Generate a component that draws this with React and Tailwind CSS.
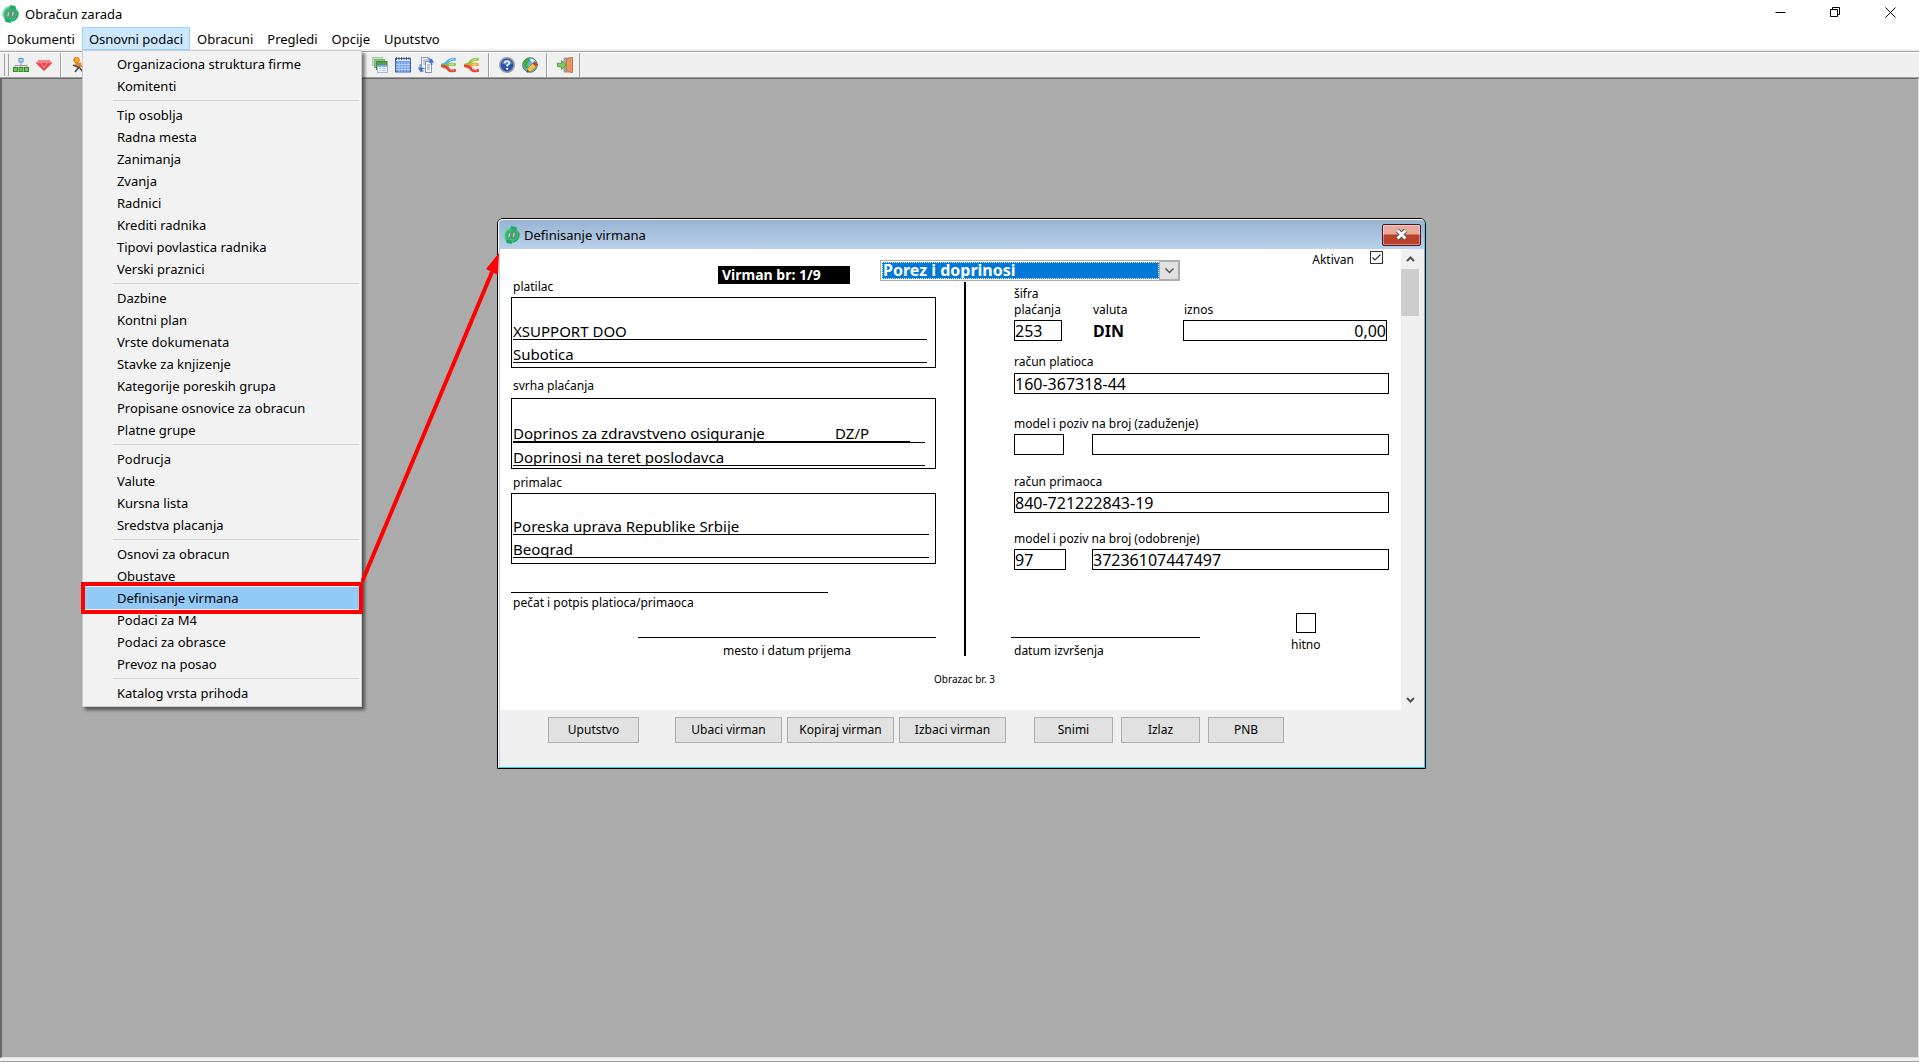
import React, { useState } from "react"

const menus = ["Dokumenti", "Osnovni podaci", "Obracuni", "Pregledi", "Opcije", "Uputstvo"]

const menuGroups = [
  ["Organizaciona struktura firme", "Komitenti"],
  ["Tip osoblja", "Radna mesta", "Zanimanja", "Zvanja", "Radnici", "Krediti radnika", "Tipovi povlastica radnika", "Verski praznici"],
  ["Dazbine", "Kontni plan", "Vrste dokumenata", "Stavke za knjizenje", "Kategorije poreskih grupa", "Propisane osnovice za obracun", "Platne grupe"],
  ["Podrucja", "Valute", "Kursna lista", "Sredstva placanja"],
  ["Osnovi za obracun", "Obustave", "Definisanje virmana", "Podaci za M4", "Podaci za obrasce", "Prevoz na posao"],
  ["Katalog vrsta prihoda"],
]

const AppLogo = () => (
  <svg width="17" height="18" viewBox="0 0 17 18" className="shrink-0">
    <circle cx="8.5" cy="9" r="7.8" fill="#2fc476" />
    <path d="M8 0 L13.5 1 L14 4.5 L8.5 4 Z" fill="#22a862" />
    <path d="M9 18 L3.5 17 L3 13.5 L8.5 14 Z" fill="#22a862" />
    <path d="M1.8 12 A7.2 7.2 0 0 1 7 2" fill="none" stroke="#6fe0a2" strokeWidth="1.6" />
    <path d="M15.2 6 A7.2 7.2 0 0 1 10 16" fill="none" stroke="#1fa75f" strokeWidth="1.6" />
    <ellipse cx="6.3" cy="9" rx="2.1" ry="3.6" fill="none" stroke="#6b9485" strokeWidth="1.8" transform="rotate(12 6.3 9)" />
    <ellipse cx="10.8" cy="8.8" rx="2.1" ry="3.6" fill="none" stroke="#5f8f7c" strokeWidth="1.8" transform="rotate(12 10.8 8.8)" />
    <path d="M6.6 7.5 L6 10.8 M11.1 7 L10.5 10.5" stroke="#b9ecd0" strokeWidth="1" />
  </svg>
)

const OrgIcon = () => (
  <svg width="16" height="16" viewBox="0 0 16 16">
    <path d="M8 5 V8 M2 11 V8.5 H14 V11 M8 8 V11" fill="none" stroke="#9a9a9a" />
    <rect x="6" y="1.5" width="4" height="3.5" fill="#b5d6fb" stroke="#5b8fd6" />
    <rect x="0.5" y="10.5" width="4" height="4" fill="#6cc45a" stroke="#3a8a2c" />
    <rect x="6" y="10.5" width="4" height="4" fill="#6cc45a" stroke="#3a8a2c" />
    <rect x="11.5" y="10.5" width="4" height="4" fill="#6cc45a" stroke="#3a8a2c" />
  </svg>
)

const GemIcon = () => (
  <svg width="16" height="16" viewBox="0 0 16 16">
    <path d="M2.5 3 H13.5 L16 6.3 L8 14 L0 6.3 Z" fill="#e8434a" />
    <path d="M2.5 3 H13.5 L16 6.3 H0 Z" fill="#f28587" />
    <path d="M4.5 6.3 L8 4 L11.5 6.3 L8 11.5 Z" fill="#f3888b" />
    <path d="M5.5 6.3 H10.5 L8 9 Z" fill="#d9323a" />
  </svg>
)

const PersonIcon = () => (
  <svg width="16" height="16" viewBox="0 0 16 16">
    <circle cx="5.5" cy="3" r="2.8" fill="#f5a623" stroke="#c9720a" strokeWidth="0.8" />
    <path d="M4 6 L10 5.5 L11 10 L5 10 Z" fill="#e8862a" />
    <path d="M2 8 L9 11 M8 10 L4 15 M8 10 L12 15" stroke="#4b4b4b" strokeWidth="1.6" />
  </svg>
)

const WindowsIcon = () => (
  <svg width="16" height="16" viewBox="0 0 16 16">
    <rect x="0.5" y="0.5" width="10" height="8" fill="#c3e0c0" stroke="#a9cfa5" />
    <rect x="2.5" y="2.5" width="10" height="8" fill="#8fc38a" stroke="#7ab075" />
    <rect x="4.5" y="4.5" width="10.5" height="8" fill="#559f50" stroke="#418a3d" />
    <rect x="5.5" y="8.5" width="10" height="7" fill="#eef5ff" stroke="#9db9de" />
    <path d="M5.5 9 H15.5" stroke="#6ea3e8" strokeWidth="1.6" />
    <path d="M7 11.5 H9 M10 11.5 H14 M7 13.5 H9 M10 13.5 H14" stroke="#b5cbea" />
  </svg>
)

const CalendarIcon = () => (
  <svg width="16" height="16" viewBox="0 0 16 16">
    <rect x="0.5" y="1.5" width="15" height="13.5" fill="#6c9bea" stroke="#3a64b8" />
    <rect x="1" y="2" width="14" height="2" fill="#e8eefb" />
    <path d="M1.5 0 V3 M4 0 V3 M6.5 0 V3 M9 0 V3 M11.5 0 V3 M14 0 V3" stroke="#555" strokeWidth="0.9" />
    <path d="M1 7.5 H15 M1 10 H15 M1 12.5 H15 M4 5 V15 M7 5 V15 M10 5 V15 M13 5 V15" stroke="#c3d8fb" strokeWidth="0.8" />
  </svg>
)

const SyncIcon = () => (
  <svg width="16" height="16" viewBox="0 0 16 16">
    <rect x="3.5" y="0.5" width="6.5" height="11" fill="#fff" stroke="#8896b4" />
    <rect x="7.5" y="4.5" width="6" height="11" fill="#fff" stroke="#8896b4" />
    <path d="M5 3 H9 M5 5 H8 M5 7 H7 M9 8 H12 M9 10 H12 M9 12 H12" stroke="#8492b0" />
    <path d="M10.5 2 Q13.5 2 13.5 8" fill="none" stroke="#4b80d8" strokeWidth="2" />
    <path d="M10.5 5.5 L13.5 1.5 L16 5.5 Z" fill="#3a6cc8" />
    <path d="M2.5 7 V13 Q2.5 14 5.5 14" fill="none" stroke="#7aa5ea" strokeWidth="2" />
    <path d="M0 10.5 L5.5 10.5 L3 15.5 Z" fill="#3a6cc8" />
  </svg>
)

const BranchIcon = ({ top, middle }) => (
  <svg width="16" height="16" viewBox="0 0 16 16">
    <path d="M13.5 2.3 Q9 2 6.5 5 Q5 7.5 1.5 8" fill="none" stroke={top} strokeWidth="3" strokeLinecap="round" />
    <path d="M13.5 7.6 Q9 6.8 7 8.2 Q4 9.3 1.5 8.5" fill="none" stroke={middle} strokeWidth="3" strokeLinecap="round" />
    <path d="M13.5 13.5 Q9 14.5 7 11.5 Q5 9.2 1.5 9" fill="none" stroke="#dd4a35" strokeWidth="3.2" strokeLinecap="round" />
    <path d="M13 13 Q9.5 13.2 8 11.2 M13 2 Q9.5 2 7.5 4.2 M13 7.3 Q10 6.8 8 7.8" fill="none" stroke="#fff" strokeOpacity="0.6" strokeWidth="0.9" />
  </svg>
)

const HelpIcon = () => (
  <svg width="16" height="16" viewBox="0 0 16 16">
    <circle cx="8" cy="8" r="7.2" fill="#2b50ad" stroke="#9a9ca6" strokeWidth="1.6" />
    <path d="M2.5 6.5 A6 6 0 0 1 13.5 6.5 Q8 9 2.5 6.5 Z" fill="#5c82d6" />
    <path d="M5.8 6.2 Q5.8 4 8 4 Q10.3 4 10.3 6 Q10.3 7.3 8.2 8.2 V9.6" fill="none" stroke="#fff" strokeWidth="1.7" />
    <circle cx="8.2" cy="11.8" r="1.1" fill="#fff" />
  </svg>
)

const GlobeIcon = () => (
  <svg width="16" height="16" viewBox="0 0 16 16">
    <circle cx="8" cy="8" r="7.3" fill="#5db6e6" stroke="#3f8a5a" />
    <path d="M1 6 Q3 1.5 7 1 L8 4 L5 7 L6 10 L3 12 Z" fill="#49a83e" />
    <path d="M8 1.5 L13 3 L11 6 L9 4 Z" fill="#d9f0fa" />
    <path d="M5 15 L5.5 11.5 L11 6 L14.5 9 L9 14.5 Z" fill="#f4c045" stroke="#b9791a" strokeWidth="0.7" />
    <path d="M10.5 6.5 L12.5 4.5 L16 7.5 L14 9.5 Z" fill="#d8352a" />
    <path d="M4.5 15.5 L5.2 12.5 L7.5 14.6 Z" fill="#555" />
  </svg>
)

const ExitIcon = () => (
  <svg width="16" height="16" viewBox="0 0 16 16">
    <path d="M7 1 H15.5 V15 H7 Z" fill="#b0a49b" stroke="#9c9c9c" />
    <path d="M9.5 2 L15.5 0.3 V15.7 L9.5 14 Z" fill="#e5955f" stroke="#bf6b34" strokeWidth="0.7" />
    <path d="M0.4 6.3 H4.5 V3.5 L9.3 8 L4.5 12.5 V9.8 H0.4 Z" fill="#7cc95f" stroke="#4a9636" strokeWidth="0.8" />
  </svg>
)

const ToolButton = ({ label, children }) => (
  <button type="button" aria-label={label} className="flex w-[23px] shrink-0 items-center justify-center">
    {children}
  </button>
)

const ToolSeparator = () => (
  <div className="flex w-3 shrink-0 justify-center">
    <div className="w-px bg-[#a0a0a0]" />
    <div className="w-px bg-white" />
  </div>
)

const TitleBar = () => (
  <header className="flex h-[27px] shrink-0 items-start justify-between bg-white pl-[2px]">
    <div className="flex items-center gap-[6px] pt-1">
      <AppLogo />
      <span className="text-[13px] leading-5">Obračun zarada</span>
    </div>
    <div className="flex pr-px">
      <button type="button" aria-label="Minimize" className="flex h-6 w-[55px] items-center justify-center">
        <svg width="11" height="11" viewBox="0 0 11 11"><path d="M0.5 5.5 H10.5" stroke="#000" /></svg>
      </button>
      <button type="button" aria-label="Restore" className="flex h-6 w-[55px] items-center justify-center">
        <svg width="11" height="11" viewBox="0 0 11 11"><path d="M0.5 2.5 H7.5 V9.5 H0.5 Z M2.5 2.5 V0.5 H9.5 V7.5 H7.5" fill="none" stroke="#000" /></svg>
      </button>
      <button type="button" aria-label="Close" className="flex h-6 w-[55px] items-center justify-center">
        <svg width="11" height="11" viewBox="0 0 11 11"><path d="M0.5 0.5 L10.5 10.5 M10.5 0.5 L0.5 10.5" stroke="#000" /></svg>
      </button>
    </div>
  </header>
)

const DropdownMenu = ({ selected, onSelect }) => (
  <div className="absolute top-[22px] -left-px z-10 w-[280px] border border-[#cccccc] bg-[#f2f2f2] py-[2px] shadow-[3px_3px_3px_rgba(0,0,0,0.5)]">
    {menuGroups.map((group, index) => (
      <ul key={index}>
        {index > 0 && <li aria-hidden="true" className="mr-[2px] ml-[30px] h-[7px] py-[3px]"><div className="h-px bg-[#d7d7d7]" /></li>}
        {group.map((item) => (
          <li key={item}>
            <button
              type="button"
              onClick={() => onSelect(item)}
              className={`relative block h-[22px] w-full pl-[34px] text-left ${item === selected ? "bg-[#91c9f7]" : ""}`}
            >
              {item}
              {item === selected && <span className="absolute -inset-x-[2px] -top-[5px] -bottom-[5px] border-4 border-[#fe0000]" />}
            </button>
          </li>
        ))}
      </ul>
    ))}
  </div>
)

const MenuBar = ({ selected, onSelect }) => (
  <nav className="flex h-[22px] shrink-0 bg-white text-[13px] leading-[22px]">
    {menus.map((menu) =>
      menu === "Osnovni podaci" ? (
        <div key={menu} className="relative h-[23px] border border-[#99d1ff] bg-[#cce8ff]">
          <button type="button" className="px-[6px]">{menu}</button>
          <DropdownMenu selected={selected} onSelect={onSelect} />
        </div>
      ) : (
        <button key={menu} type="button" className="h-6 px-[7px]">{menu}</button>
      )
    )}
  </nav>
)

const Toolbar = () => (
  <div className="mt-[2px] flex h-[27px] shrink-0 border-t border-b border-[#a0a0a0] bg-[#f0f0f0]">
    <div className="flex w-full border-t border-white">
      <div className="my-px ml-1 flex w-[5px] shrink-0 justify-between">
        <div className="w-px bg-[#a0a0a0]" />
        <div className="w-px bg-[#a0a0a0]" />
      </div>
      <ToolButton label="Organizaciona struktura"><OrgIcon /></ToolButton>
      <ToolButton label="Vrednosti"><GemIcon /></ToolButton>
      <ToolSeparator />
      <ToolButton label="Radnici"><PersonIcon /></ToolButton>
      <div className="w-[266px] shrink-0" />
      <ToolSeparator />
      <ToolButton label="Prozori"><WindowsIcon /></ToolButton>
      <ToolButton label="Kalendar"><CalendarIcon /></ToolButton>
      <ToolButton label="Prenos"><SyncIcon /></ToolButton>
      <ToolButton label="Raspodela"><BranchIcon top="#4fb4e0" middle="#8cc63f" /></ToolButton>
      <ToolButton label="Raspodela po grupama"><BranchIcon top="#8cc63f" middle="#f5a033" /></ToolButton>
      <ToolSeparator />
      <ToolButton label="Uputstvo"><HelpIcon /></ToolButton>
      <ToolButton label="Internet"><GlobeIcon /></ToolButton>
      <ToolSeparator />
      <ToolButton label="Izlaz"><ExitIcon /></ToolButton>
      <div className="ml-[3px] w-px bg-[#a0a0a0]" />
    </div>
  </div>
)

const LinedInput = ({ className = "h-[23px]", ...props }) => (
  <input type="text" className={`min-w-0 border-b border-black pt-[5px] text-[15px] leading-4 outline-none ${className}`} {...props} />
)

const BoxInput = ({ className = "", ...props }) => (
  <input type="text" className={`h-[21px] min-w-0 border border-black text-base leading-4 outline-none ${className}`} {...props} />
)

const PayerColumn = () => (
  <div className="w-[425px] shrink-0">
    <label htmlFor="platilac" className="block pl-[2px]">platilac</label>
    <div className="mt-[2px] flex h-[71px] flex-col justify-end border border-black pr-2 pb-1 pl-px">
      <LinedInput id="platilac" defaultValue="XSUPPORT DOO" />
      <LinedInput aria-label="mesto platioca" defaultValue="Subotica" />
    </div>
    <label htmlFor="svrha" className="mt-[10px] block pl-[2px]">svrha plaćanja</label>
    <div className="mt-1 flex h-[71px] flex-col justify-end border border-black pr-[10px] pb-[2px] pl-px">
      <div className="flex border-b border-black">
        <LinedInput id="svrha" className="h-[22px] w-[322px]" defaultValue="Doprinos za zdravstveno osiguranje" />
        <LinedInput aria-label="oznaka" className="h-[22px] w-[75px]" defaultValue="DZ/P" />
      </div>
      <LinedInput aria-label="opis" defaultValue="Doprinosi na teret poslodavca" />
    </div>
    <label htmlFor="primalac" className="mt-[6px] block pl-[2px]">primalac</label>
    <div className="mt-[2px] flex h-[71px] flex-col justify-end border border-black pr-[6px] pb-[5px] pl-px">
      <LinedInput id="primalac" defaultValue="Poreska uprava Republike Srbije" />
      <LinedInput aria-label="mesto primaoca" defaultValue="Beograd" />
    </div>
    <div className="mt-7 w-[317px] border-t border-black pt-[2px] pl-[2px]">pečat i potpis platioca/primaoca</div>
    <div className="mt-[26px] ml-[127px] border-t border-black pt-[5px] text-center">mesto i datum prijema</div>
  </div>
)

const PaymentColumn = () => (
  <div className="w-[375px] shrink-0 pt-[7px]">
    <div className="flex items-end">
      <div className="w-[79px]">
        <label htmlFor="sifra" className="block w-12">šifra plaćanja</label>
        <BoxInput id="sifra" className="mt-[2px] w-12" defaultValue="253" />
      </div>
      <div className="w-[90px]">
        <div>valuta</div>
        <div className="mt-[2px] h-[21px] text-base leading-[22px] font-bold">DIN</div>
      </div>
      <div>
        <label htmlFor="iznos" className="block pl-px">iznos</label>
        <BoxInput id="iznos" className="mt-[2px] w-[204px] text-right" defaultValue="0,00" />
      </div>
    </div>
    <label htmlFor="racun-platioca" className="mt-[13px] block">račun platioca</label>
    <BoxInput id="racun-platioca" className="mt-[3px] w-full" defaultValue="160-367318-44" />
    <label htmlFor="zaduzenje" className="mt-[22px] block">model i poziv na broj (zaduženje)</label>
    <div className="mt-[2px] flex justify-between">
      <BoxInput aria-label="model zaduženja" className="w-[50px]" />
      <BoxInput id="zaduzenje" className="w-[297px]" />
    </div>
    <label htmlFor="racun-primaoca" className="mt-[19px] block">račun primaoca</label>
    <BoxInput id="racun-primaoca" className="mt-[2px] w-full" defaultValue="840-721222843-19" />
    <label htmlFor="odobrenje" className="mt-[18px] block">model i poziv na broj (odobrenje)</label>
    <div className="mt-[2px] flex justify-between">
      <BoxInput aria-label="model odobrenja" className="w-[52px]" defaultValue="97" />
      <BoxInput id="odobrenje" className="w-[297px]" defaultValue="37236107447497" />
    </div>
    <div className="mt-[43px] -ml-[3px] flex">
      <div className="mt-6 w-[189px] border-t border-black pt-[5px] pl-[3px]">datum izvršenja</div>
      <div className="ml-[91px] flex flex-col items-center gap-1">
        <input id="hitno" type="checkbox" className="size-5 appearance-none border border-black bg-white" />
        <label htmlFor="hitno">hitno</label>
      </div>
    </div>
  </div>
)

const FooterButton = ({ className, children }) => (
  <button type="button" className={`h-[26px] border border-[#adadad] bg-[#e1e1e1] ${className}`}>{children}</button>
)

const VirmanDialog = () => (
  <section className="absolute top-[139px] left-[495px] flex w-[929px] flex-col rounded-t-md border border-black bg-[#f0f0f0] text-[12px] leading-4">
    <div className="flex flex-col overflow-hidden rounded-t-[5px] border border-white border-r-[#2ad4f4] border-b-[#2ad4f4]">
      <div className="flex h-[29px] items-center bg-linear-to-b from-[#98b4d2] to-[#b9d1ea] pr-[3px] pl-1">
        <AppLogo />
        <h2 className="ml-1 flex-1 text-[13px]">Definisanje virmana</h2>
        <button type="button" aria-label="Zatvori" className="flex h-[22px] w-[39px] items-center justify-center rounded-[2px] border border-[#4a1420] bg-linear-to-b from-[#e9a99d] from-45% to-[#b9412a] to-50% shadow-[inset_0_0_0_1px_rgba(255,255,255,0.4)]">
          <svg width="15" height="13" viewBox="0 0 15 13">
            <path d="M3.5 2.5 L11.5 10.5 M11.5 2.5 L3.5 10.5" stroke="#535666" strokeWidth="4.6" />
            <path d="M3.5 2.5 L11.5 10.5 M11.5 2.5 L3.5 10.5" stroke="#fff" strokeWidth="2.8" />
          </svg>
        </button>
      </div>
      <div className="flex border-l border-[#b9d1ea]">
        <form className="h-[461px] flex-1 bg-white">
          <div className="flex h-[30px] items-start">
            <div className="mt-[17px] ml-[218px] h-[18px] w-[132px] bg-black pl-1 text-[14px] leading-[18px] font-bold text-white">Virman br: 1/9</div>
            <div className="relative mt-[11px] ml-[30px] h-[21px] w-[300px] border border-[#adadad] bg-white p-px">
              <select aria-label="vrsta virmana" className="block h-[17px] w-[277px] appearance-none border border-dotted border-white bg-[#0078d7] text-base leading-[15px] font-bold text-white">
                <option>Porez i doprinosi</option>
              </select>
              <span className="pointer-events-none absolute top-0 right-0 flex h-[19px] w-5 items-center justify-center border border-[#adadad] bg-[#e1e1e1]">
                <svg width="9" height="6" viewBox="0 0 9 6"><path d="M0.5 0.5 L4.5 4.5 L8.5 0.5" fill="none" stroke="#505050" strokeWidth="1.3" /></svg>
              </span>
            </div>
            <div className="mt-[2px] mr-[18px] ml-auto flex items-start gap-4">
              <label htmlFor="aktivan" className="pt-px">Aktivan</label>
              <span className="relative block size-[13px]">
                <input id="aktivan" type="checkbox" defaultChecked className="block size-[13px] appearance-none border border-[#333] bg-white" />
                <svg width="13" height="13" viewBox="0 0 13 13" className="pointer-events-none absolute inset-0"><path d="M2.5 6.5 L5 9 L10.5 3.5" fill="none" stroke="#333" strokeWidth="1.2" /></svg>
              </span>
            </div>
          </div>
          <div className="flex pr-3 pl-[11px]">
            <PayerColumn />
            <div className="mt-[3px] ml-7 h-[374px] w-[2px] shrink-0 bg-black" />
            <div className="ml-12"><PaymentColumn /></div>
          </div>
          <p className="mt-3 ml-[434px] text-[10px]">Obrazac br. 3</p>
        </form>
        <div className="mr-[5px] flex w-[18px] flex-col items-center">
          <button type="button" aria-label="Gore" className="flex h-5 w-full items-center justify-center">
            <svg width="9" height="6" viewBox="0 0 9 6"><path d="M1 5 L4.5 1.5 L8 5" fill="none" stroke="#505050" strokeWidth="2" /></svg>
          </button>
          <div className="h-[47px] w-full bg-[#cdcdcd]" />
          <button type="button" aria-label="Dole" className="mt-auto flex h-5 w-full items-center justify-center">
            <svg width="9" height="6" viewBox="0 0 9 6"><path d="M1 1 L4.5 4.5 L8 1" fill="none" stroke="#505050" strokeWidth="2" /></svg>
          </button>
        </div>
      </div>
      <footer className="flex border-l border-[#b9d1ea] pt-[7px] pb-6 pl-12">
        <FooterButton className="w-[91px]">Uputstvo</FooterButton>
        <div className="ml-9 flex gap-[5px]">
          <FooterButton className="w-[107px]">Ubaci virman</FooterButton>
          <FooterButton className="w-[107px]">Kopiraj virman</FooterButton>
          <FooterButton className="w-[107px]">Izbaci virman</FooterButton>
        </div>
        <div className="ml-7 flex gap-2">
          <FooterButton className="w-[79px]">Snimi</FooterButton>
          <FooterButton className="w-[79px]">Izlaz</FooterButton>
          <FooterButton className="w-[76px]">PNB</FooterButton>
        </div>
      </footer>
    </div>
  </section>
)

const App = () => {
  const [selected, setSelected] = useState("Definisanje virmana")

  return (
    <div className="relative flex h-screen flex-col overflow-hidden bg-[#f0f0f0] font-['Noto_Sans','Open_Sans',sans-serif] text-black">
      <TitleBar />
      <MenuBar selected={selected} onSelect={setSelected} />
      <Toolbar />
      <main className="relative flex-1 border-t border-r border-b border-l-2 border-t-[#696969] border-r-[#e3e3e3] border-b-[#e3e3e3] border-l-[#696969] bg-[#ababab]">
        {selected === "Definisanje virmana" && <VirmanDialog />}
      </main>
      <div className="mt-[3px] h-px shrink-0 bg-[#a0a0a0]" />
      {/* Pointer from the menu item to its dialog */}
      <svg width="140" height="340" viewBox="0 0 140 340" className="pointer-events-none absolute top-[248px] left-[361px] z-20">
        <path d="M1 334 L131 24" stroke="#fe0000" strokeWidth="4" />
        <path d="M138 5 L137 27 L125 21 Z" fill="#fe0000" />
      </svg>
    </div>
  )
}

export default App
